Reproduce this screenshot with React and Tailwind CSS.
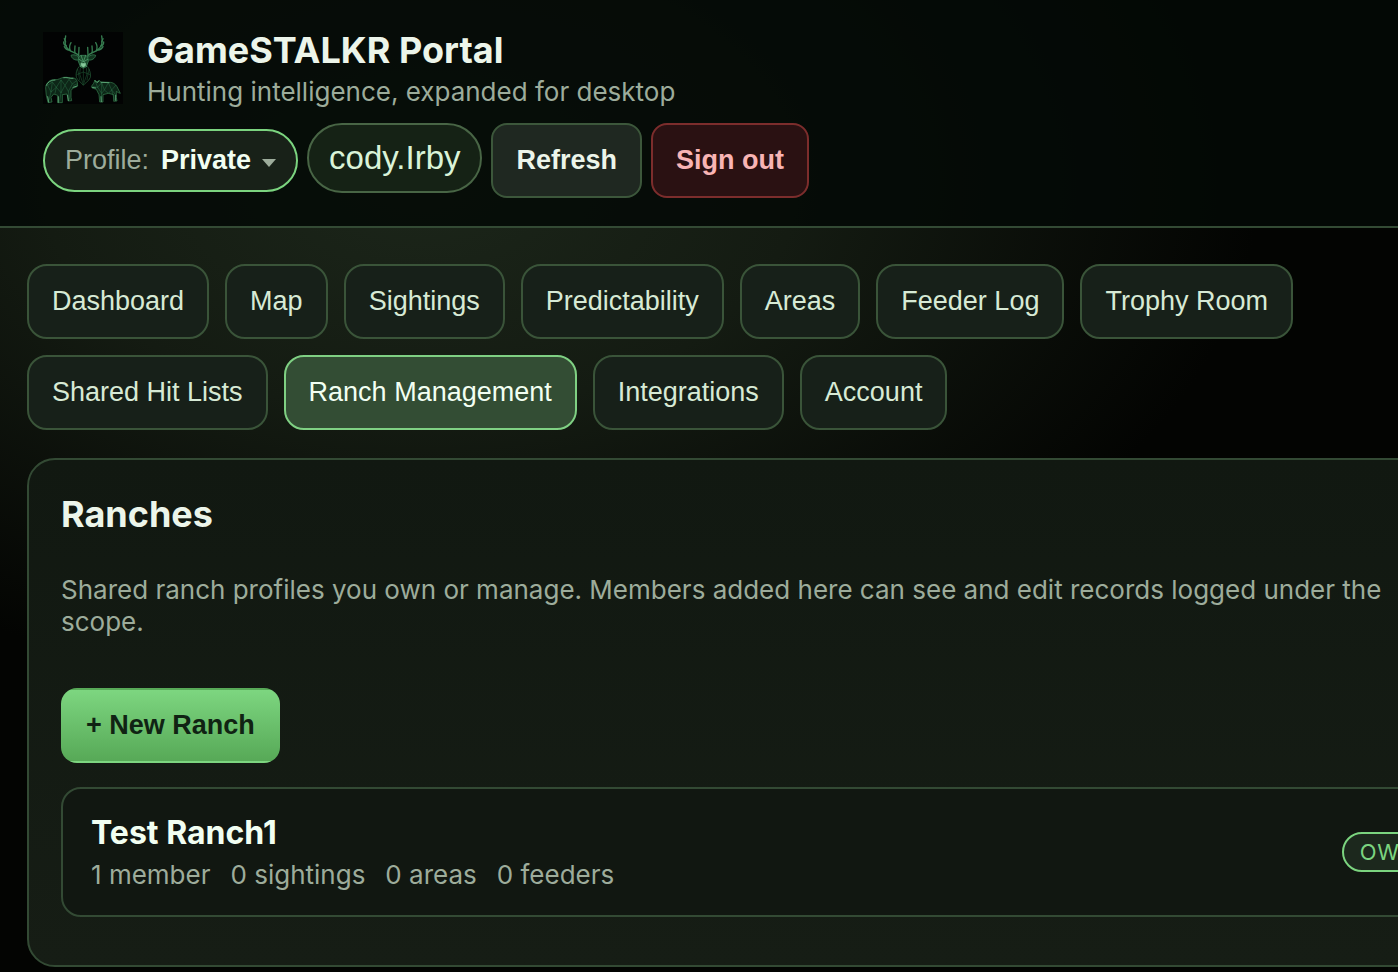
import React, { useState } from "react";

const tabs = [
  "Dashboard",
  "Map",
  "Sightings",
  "Predictability",
  "Areas",
  "Feeder Log",
  "Trophy Room",
  "Shared Hit Lists",
  "Ranch Management",
  "Integrations",
  "Account",
];

const ranches = [
  { name: "Test Ranch1", role: "OWNER", stats: ["1 member", "0 sightings", "0 areas", "0 feeders"] },
];

function Logo() {
  return (
    <svg viewBox="0 0 240 216" className="w-20 h-[72px] shrink-0 bg-[#020303]" fill="none" strokeLinecap="round" strokeLinejoin="round" role="img" aria-label="GameSTALKR">
      {/* antlers */}
      <g stroke="#367d50" strokeWidth="4">
        <path d="M108 72 C102 62 88 62 78 54 C66 44 64 28 68 12" />
        <path d="M134 72 C140 62 154 62 164 54 C176 44 180 28 176 12" />
        <path d="M68 30 L64 20 M70 42 C64 40 62 34 62 30 M82 56 C78 46 80 38 84 32 M96 62 C94 54 96 48 96 42 M78 54 C70 54 66 48 64 44 M107 70 L108 46" />
        <path d="M176 30 L180 20 M174 42 C180 40 182 34 182 30 M160 56 C164 46 162 38 158 32 M147 62 C149 54 147 48 147 42 M165 54 C172 54 178 48 180 44 M135 70 L134 46" />
      </g>
      {/* deer head and neck */}
      <g stroke="#3f9160" strokeWidth="2">
        <path d="M108 76 C98 66 88 68 84 70 C86 80 96 86 106 84" fill="#12351f" />
        <path d="M134 76 C144 66 154 68 158 70 C156 80 146 86 136 84" fill="#12351f" />
        <path d="M108 74 L114 70 L128 70 L134 74 L136 88 L130 104 L121 109 L112 104 L106 88 Z" fill="#1b4a2c" />
        <path d="M114 70 L121 90 L128 70 M108 82 L118 88 L112 104 M134 82 L124 88 L130 104" stroke="#5cae7a" />
        <path d="M114 94 L128 94 L127 102 L121 106 L115 102 Z" fill="#86c99b" stroke="#86c99b" strokeWidth="1" />
        <path d="M108 104 C100 112 98 126 100 136 C106 148 116 152 121 160 C126 152 138 148 142 136 C144 126 140 112 134 104" stroke="#28663e" />
        <path d="M104 112 L110 144 M112 108 L110 126 L121 158 L132 126 L130 108 M121 110 L121 150 M138 112 L132 144 M101 128 L121 120 L141 128" stroke="#23603a" strokeWidth="1.5" />
      </g>
      {/* bear */}
      <g stroke="#37804f" strokeWidth="2">
        <path d="M8 166 C10 150 22 142 36 143 C46 144 52 138 62 136 C74 134 82 140 90 138 C98 138 102 144 103 152 L104 162 L98 166 L90 168 L84 176 L84 196 L86 206 L76 207 L72 186 L58 188 L58 212 L44 212 L44 190 L32 186 L24 196 L27 210 L15 212 L10 190 Z" fill="#0d2617" />
        <path d="M14 160 L28 150 L40 166 L54 144 L66 160 L78 142 L88 156 L98 148 M14 160 L24 180 L40 166 L54 182 L66 160 L76 178 L88 156 M24 180 L18 204 M54 182 L50 208 M76 178 L80 202 M28 150 L24 180 M54 144 L54 182 M40 166 L36 184 M92 160 L102 156" stroke="#2b6e46" strokeWidth="1.5" />
        <path d="M10 160 C14 150 24 144 36 144 M62 137 C72 135 80 140 90 139 M74 190 L76 206 M46 194 L46 211 M14 194 L17 210 M90 166 L102 162" stroke="#64b380" strokeWidth="2.5" />
      </g>
      {/* wolf */}
      <g stroke="#37804f" strokeWidth="2">
        <path d="M146 162 L152 154 L156 144 L162 150 L168 145 L174 150 L198 151 C210 150 220 158 224 168 L232 184 L226 182 L220 178 L220 196 L222 207 L212 208 L212 188 L196 184 L180 188 L180 210 L170 210 L168 188 L160 172 L148 168 Z" fill="#0d2617" />
        <path d="M156 146 L164 166 L176 152 L184 174 L196 152 L206 174 L218 160 M164 166 L176 184 L184 174 L196 184 L206 174 L218 188 M164 166 L150 164 M176 184 L174 208 M206 174 L214 204 M176 152 L176 184" stroke="#2b6e46" strokeWidth="1.5" />
        <path d="M156 146 L162 152 L168 147 M174 151 L198 152 M218 190 L218 205 M174 194 L175 209 M148 166 L158 168" stroke="#64b380" strokeWidth="2.5" />
      </g>
    </svg>
  );
}

export default function App() {
  const [active, setActive] = useState("Ranch Management");
  const [profile, setProfile] = useState("Private");
  return (
    <div className="min-h-screen overflow-hidden bg-black bg-[radial-gradient(ellipse_840px_520px_at_420px_180px,#1c261a_0%,#141b12_45%,#030402_100%)] font-['Inter',sans-serif] text-[#ecf5ea]">
      <div className="min-w-[1554px]">
        <header className="px-[43px] py-7 border-b-2 border-[#334a34] bg-[#040906]/85">
          <div className="flex items-center gap-6">
            <Logo />
            <div>
              <h1 className="text-[36px] leading-[44px] font-bold">GameSTALKR Portal</h1>
              <p className="mt-1 text-[26px] leading-8 text-[#9dac9b]">Hunting intelligence, expanded for desktop</p>
            </div>
          </div>

          <div className="mt-[15px] flex items-baseline gap-[9px] font-['Liberation_Sans',sans-serif] text-[27px] leading-[31px]">
            <label className="flex items-center rounded-full border-2 border-[#7bd47f] bg-[#182118] py-[14px] px-5">
              <span className="text-[#9dac9b]">Profile:</span>
              <select
                value={profile}
                onChange={(e) => setProfile(e.target.value)}
                className="ml-3 w-[93px] appearance-none bg-transparent font-bold text-[#f2fff2] outline-none"
              >
                <option>Private</option>
                <option>Test Ranch1</option>
              </select>
              <svg viewBox="0 0 14 8" className="ml-2 mt-1 w-[14px] h-2" fill="#9dac9b" aria-hidden="true">
                <path d="M0 0h14L7 8z" />
              </svg>
            </label>
            <span className="rounded-full border-2 border-[#486545] bg-[#152215] px-5 py-[14px] text-[33px] leading-[38px] text-[#d9f3d8]">cody.Irby</span>
            <button className="rounded-2xl border-2 border-[#3c573b] bg-[#1f2821] px-[23px] py-5 font-bold">Refresh</button>
            <button className="rounded-2xl border-2 border-[#7c2d2c] bg-[#2a1112] px-[23px] py-5 font-bold text-[#f8b4b4]">Sign out</button>
          </div>
        </header>

        <main className="px-[27px] pt-9">
          <nav className="flex flex-wrap gap-4 font-['Liberation_Sans',sans-serif] text-[27px] leading-[31px]">
            {tabs.map((t) => (
              <button
                key={t}
                onClick={() => setActive(t)}
                className={`rounded-[20px] border-2 px-[23px] py-5 ${
                  active === t ? "border-[#7fd083] bg-[#334d34] text-[#f2fff2]" : "border-[#3a5439] bg-[#172019] text-[#d7ead5]"
                }`}
              >
                {t}
              </button>
            ))}
          </nav>

          <section className="mt-7 rounded-[28px] border-2 border-[#334a34] bg-gradient-to-b from-[#111811] to-[#161d15] px-8 pt-8 pb-12">
            <h2 className="text-[36px] leading-[44px] font-bold">Ranches</h2>
            <p className="mt-[38px] text-[26px] leading-8 text-[#9dac9b]">
              Shared ranch profiles you own or manage. Members added here can see and edit records logged under the
              <br />
              scope.
            </p>
            {/* gradient repeats under the transparent border, which gives the thin edge lines */}
            <button className="mt-[50px] rounded-2xl border-2 border-transparent bg-gradient-to-b from-[#7dd680] to-[#57a957] px-[23px] py-5 font-['Liberation_Sans',sans-serif] text-[27px] leading-[31px] font-bold text-[#102313]">
              + New Ranch
            </button>

            {ranches.map((r) => (
              <article key={r.name} className="mt-6 flex items-center justify-between rounded-[20px] border-2 border-[#334a34] bg-[#111711] px-7 py-6">
                <div>
                  <h3 className="text-[32px] leading-10 font-bold text-[#f2fff2]">{r.name}</h3>
                  <ul className="mt-1.5 flex gap-5 text-[26px] leading-8 text-[#9dac9b]">
                    {r.stats.map((s) => (
                      <li key={s}>{s}</li>
                    ))}
                  </ul>
                </div>
                <span className="rounded-full border-2 border-[#7bd47f] bg-[#1c281d] px-4 py-1 text-[22px] leading-7 tracking-wide text-[#7bd47f]">{r.role}</span>
              </article>
            ))}
          </section>
        </main>
      </div>
    </div>
  );
}
